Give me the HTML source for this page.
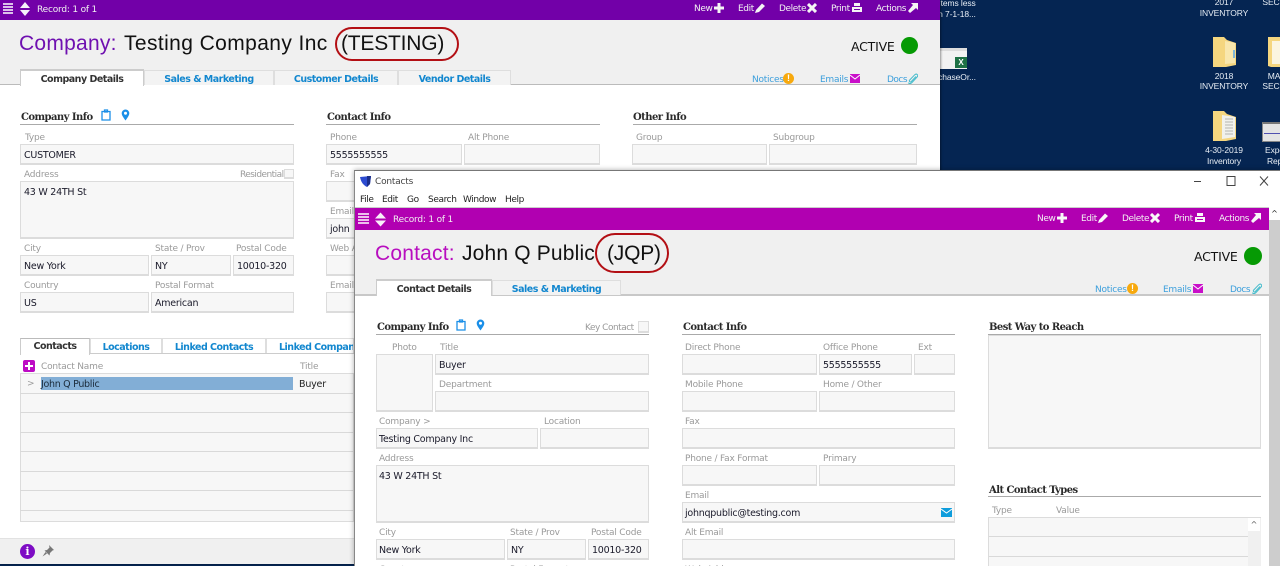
<!DOCTYPE html>
<html><head><meta charset="utf-8"><title>Contacts</title>
<style>
html,body{margin:0;padding:0;width:1280px;height:566px;overflow:hidden;background:#052552}
body{position:relative;font-family:"DejaVu Sans","Liberation Sans",sans-serif;font-size:9.5px;color:#111}
div,span,svg{position:absolute;box-sizing:border-box;white-space:nowrap}
.f{background:#f7f7f7;border:1px solid #dcdcdc;border-bottom-width:2px;padding:0 3px;line-height:22px;font-size:9.5px;color:#1a1a2a;letter-spacing:-.25px}
.l{font-size:9px;color:#9a9a9a;line-height:12px;letter-spacing:-.2px;margin-top:1px}
.h{font-family:"DejaVu Serif","Liberation Serif",serif;font-weight:bold;font-size:10px;color:#2a2a2a;line-height:12px;letter-spacing:-.55px;margin-top:2px}
.r{height:1px;background:#aaa}
.t{font-family:"DejaVu Sans",sans-serif;font-weight:bold;font-size:9.5px;line-height:18px;text-align:center;color:#1287cf;border:1px solid #dedede;border-bottom:0;background:#f3f3f3;letter-spacing:-.5px}
.a{color:#333;background:#fff;border:1px solid #ccc;border-bottom:0;border-top:2px solid #ccc;line-height:16px}
.m{font-size:9px;color:#f2f2f2;line-height:12px;letter-spacing:-.2px;margin-top:1px}
.m2{letter-spacing:-.4px}
.n{font-size:9px;color:#3c9fdc;line-height:12px;letter-spacing:-.25px;margin-top:1px}
.d{font-family:"Liberation Sans",sans-serif;font-size:8.5px;color:#e8eef5;line-height:11px;text-align:center;width:70px;letter-spacing:-.1px;margin-top:1px}
.g{left:20px;width:334px;height:1px;background:#d9d9d9}
.w{font-size:9px;line-height:12px;color:#222;letter-spacing:-.4px}
.tt{font-family:'Liberation Sans',sans-serif;font-size:21px;line-height:26px;color:#111}
</style></head><body>

<!-- desktop -->
<div class="d" style="left:922px;top:-3px">Items less</div>
<div class="d" style="left:922px;top:8px">n 7-1-18...</div>
<div style="left:940px;top:48px;width:27px;height:21px;background:#f2f2f2;border-top:3px solid #ddd"></div>
<div style="left:955px;top:57px;width:12px;height:11px;background:#1e7145;color:#fff;font:bold 8px/11px 'Liberation Sans',sans-serif;text-align:center">X</div>
<div class="d" style="left:922px;top:71px">chaseOr...</div>
<div class="d" style="left:1189px;top:-4px">2017</div>
<div class="d" style="left:1189px;top:7px">INVENTORY</div>
<svg style="left:1212px;top:36px" width="25" height="32" viewBox="0 0 25 32"><path d="M1 1h11l3 3 9 3v22l-10 2-13 0z" fill="#f5d67f"/><path d="M13 5l10 2v20l-10 1z" fill="#f9e7ad"/><path d="M21 14h2v8h-2z" fill="#7fb6d8"/></svg>
<div class="d" style="left:1189px;top:70px">2018</div>
<div class="d" style="left:1189px;top:80px">INVENTORY</div>
<svg style="left:1267px;top:36px" width="13" height="32" viewBox="0 0 13 32"><path d="M1 1h12v30H4l-3-1z" fill="#f5d67f"/><path d="M5 5h8v23H5z" fill="#fbf5e0"/></svg>
<div class="d" style="left:1239px;top:70px">MA</div>
<div class="d" style="left:1239px;top:80px">SECU</div>
<div class="d" style="left:1239px;top:-4px">SECU</div>
<svg style="left:1212px;top:110px" width="25" height="32" viewBox="0 0 25 32"><path d="M1 1h11l3 3 9 3v22l-10 2-13 0z" fill="#f5d67f"/><path d="M10 5l13 2v20l-13 2z" fill="#f1f1ec"/><path d="M13 9h8M13 12h8M13 15h8M13 18h8M13 21h8M13 24h8" stroke="#b5b5b0"/></svg>
<div class="d" style="left:1189px;top:144px">4-30-2019</div>
<div class="d" style="left:1189px;top:155px">Inventory</div>
<div style="left:1262px;top:122px;width:18px;height:20px;background:#e4e4e4;border:1px solid #888;border-right:0;border-top:2px solid #777"></div>
<div style="left:1264px;top:133px;width:16px;height:1px;background:#5050b0"></div>
<div class="d" style="left:1265px;top:144px;text-align:left">Expe</div>
<div class="d" style="left:1267px;top:155px;text-align:left">Rep</div>

<!-- company window -->
<div style="left:0;top:0;width:940px;height:564px;background:#fff;box-shadow:1px 0 2px #0006">
 <div style="left:0;top:0;width:940px;height:20px;background:#7200a8"></div>
 <svg style="left:3px;top:2px" width="28" height="14" viewBox="0 0 28 14"><path d="M0 2h10M0 5h10M0 8h10M0 11h10" stroke="#eadcf2" stroke-width="1.800"/><path d="M17 6l5-6 5 6zM17 8l5 6 5-6z" fill="#f6f0fa"/></svg>
 <div class="m" style="left:37px;top:3px">Record: 1 of 1</div>
 <div class="m m2" style="left:694px;top:2px">New</div>
 <svg style="left:714px;top:3px" width="10" height="10" viewBox="0 0 10 10"><path d="M3.500 0h3v3.500H10v3H6.500V10h-3V6.500H0v-3h3.500z" fill="#f4f4f4"/></svg>
 <div class="m m2" style="top:2px;left:738px">Edit</div>
 <svg style="left:755px;top:3px" width="11" height="10" viewBox="0 0 11 10"><path d="M0 10l1-3 6-6.500 3 2.500-6 6z" fill="#f4f4f4"/></svg>
 <div class="m m2" style="top:2px;left:779px">Delete</div>
 <svg style="left:807px;top:3px" width="10" height="10" viewBox="0 0 10 10"><path d="M1 1l8 8M9 1l-8 8" stroke="#f4f4f4" stroke-width="3"/></svg>
 <div class="m m2" style="left:831px;top:2px">Print</div>
 <svg style="top:3px;left:852px" width="10" height="10" viewBox="0 0 10 10"><path d="M2 0h6v3H2zM0 4h10v5H0z" fill="#f4f4f4"/><path d="M2 6.500h6" stroke="#7200a8"/></svg>
 <div class="m m2" style="left:876px;top:2px">Actions</div>
 <svg style="left:907px;top:3px" width="11" height="10" viewBox="0 0 11 10"><path d="M4 0h7v7l-2-2-6 5-2-2 5-6z" fill="#f4f4f4"/></svg>

 <div style="left:0;top:20px;width:940px;height:65px;background:#f0f0f0;border-bottom:1px solid #bbb"></div>
 <div class="tt" style="left:19px;top:31px;color:#6f10b0;letter-spacing:.25px">Company:</div>
 <div class="tt" style="left:124px;top:31px;letter-spacing:.4px">Testing Company Inc</div>
 <div class="tt" style="left:341px;top:31px;letter-spacing:-.2px">(TESTING)</div>
 <div style="left:335px;top:27px;width:124px;height:34px;border:2px solid #b30f14;border-radius:17px"></div>
 <div style="left:851px;top:39px;font-size:12.5px;line-height:15px;color:#111;letter-spacing:-.2px">ACTIVE</div>
 <div style="left:901px;top:37px;width:17px;height:17px;border-radius:50%;background:#069a04"></div>

 <div class="t a" style="left:20px;top:69px;width:124px;height:17px;line-height:17px">Company Details</div>
 <div class="t" style="left:144px;top:70px;width:130px;height:15px">Sales &amp; Marketing</div>
 <div class="t" style="left:274px;top:70px;width:124px;height:15px">Customer Details</div>
 <div class="t" style="left:398px;top:70px;width:113px;height:15px">Vendor Details</div>

 <div class="n" style="left:752px;top:73px">Notices</div>
 <div style="left:783px;top:73px;width:11px;height:11px;border-radius:50%;background:#f7a90e;color:#fff;font:bold 9px/11px 'Liberation Sans',sans-serif;text-align:center">!</div>
 <div class="n" style="left:820px;top:73px">Emails</div>
 <svg style="left:850px;top:74px" width="10" height="9" viewBox="0 0 10 9"><path d="M0 0h10v9H0z" fill="#c90fc9"/><path d="M0 1l5 4 5-4" stroke="#fff" fill="none"/></svg>
 <div class="n" style="left:887px;top:73px;letter-spacing:-.5px">Docs</div>
 <svg style="left:907px;top:73px" width="11" height="11" viewBox="0 0 11 11"><path d="M9 3.500L4.200 8.600c-1 1-2.600-.4-1.600-1.500L7.800 1.700c1.800-1.700 3.900.6 2.300 2.300L5 9.500c-1 1-2.500 1.500-3.800.3" fill="none" stroke="#45bccc" stroke-width="1"/></svg>

 <div class="h" style="left:21px;top:110px">Company Info</div>
 <svg style="left:101px;top:109px" width="10" height="12" viewBox="0 0 10 12"><path d="M1 2.500h8V11H1zM3.500 1h3v2h-3z" fill="none" stroke="#1b8fe8" stroke-width="1.300"/></svg>
 <svg style="left:121px;top:109px" width="9" height="12" viewBox="0 0 9 12"><path d="M4.500 11.500C2 8 .7 6.200.7 4.300a3.800 3.800 0 0 1 7.600 0c0 1.900-1.300 3.700-3.800 7.200z" fill="#1b8fe8"/><circle cx="4.500" cy="4.200" r="1.500" fill="#fff"/></svg>
 <div class="r" style="left:20px;top:124px;width:274px"></div>
 <div class="l" style="left:25px;top:131px">Type</div>
 <div class="f" style="left:20px;top:144px;width:274px;height:21px">CUSTOMER</div>
 <div class="l" style="left:240px;top:168px;letter-spacing:-.55px">Residential</div>
 <div class="l" style="left:24px;top:168px">Address</div>
 <div class="f" style="left:284px;top:169px;width:10px;height:10px"></div>
 <div class="f" style="left:20px;top:181px;width:274px;height:58px">43 W 24TH St</div>
 <div class="l" style="left:24px;top:242px">City</div>
 <div class="l" style="left:155px;top:242px">State / Prov</div>
 <div class="l" style="left:236px;top:242px">Postal Code</div>
 <div class="f" style="left:20px;top:255px;width:129px;height:21px">New York</div>
 <div class="f" style="left:151px;top:255px;width:80px;height:21px">NY</div>
 <div class="f" style="left:233px;top:255px;width:61px;height:21px">10010-320</div>
 <div class="l" style="left:24px;top:279px">Country</div>
 <div class="l" style="left:155px;top:279px">Postal Format</div>
 <div class="f" style="left:20px;top:292px;width:129px;height:21px">US</div>
 <div class="f" style="left:151px;top:292px;width:143px;height:21px">American</div>

 <div class="h" style="left:327px;top:110px">Contact Info</div>
 <div class="r" style="left:326px;top:124px;width:274px"></div>
 <div class="l" style="left:330px;top:131px">Phone</div>
 <div class="l" style="left:468px;top:131px">Alt Phone</div>
 <div class="f" style="left:326px;top:144px;width:136px;height:21px">5555555555</div>
 <div class="f" style="left:464px;top:144px;width:136px;height:21px"></div>
 <div class="l" style="left:330px;top:168px">Fax</div>
 <div class="f" style="left:326px;top:181px;width:40px;height:21px"></div>
 <div class="l" style="left:330px;top:205px">Email</div>
 <div class="f" style="left:326px;top:218px;width:40px;height:21px">john</div>
 <div class="l" style="left:330px;top:242px">Web A</div>
 <div class="f" style="left:326px;top:255px;width:40px;height:21px"></div>
 <div class="l" style="left:330px;top:279px">Email</div>
 <div class="f" style="left:326px;top:292px;width:40px;height:21px"></div>

 <div class="h" style="left:633px;top:110px">Other Info</div>
 <div class="r" style="left:633px;top:124px;width:284px"></div>
 <div class="l" style="left:636px;top:131px">Group</div>
 <div class="l" style="left:773px;top:131px">Subgroup</div>
 <div class="f" style="left:632px;top:144px;width:135px;height:21px"></div>
 <div class="f" style="left:769px;top:144px;width:148px;height:21px"></div>

 <div style="left:20px;top:353px;width:334px;height:1px;background:#ccc"></div>
 <div class="t a" style="left:20px;top:338px;width:70px;height:17px;border-top:1px solid #bbb">Contacts</div>
 <div class="t" style="left:90px;top:338px;width:72px;height:15px;background:#fff">Locations</div>
 <div class="t" style="left:162px;top:338px;width:104px;height:15px;background:#fff">Linked Contacts</div>
 <div class="t" style="left:266px;top:338px;width:88px;height:15px;background:#fff;text-align:left;padding-left:12px;overflow:hidden">Linked Companies</div>
 <div style="left:23px;top:360px;width:12px;height:12px;background:#bd0bc4;border-radius:2px"></div>
 <svg style="left:25px;top:362px" width="8" height="8" viewBox="0 0 8 8"><path d="M3 0h2v3h3v2H5v3H3V5H0V3h3z" fill="#fff"/></svg>
 <div class="l" style="left:41px;top:360px">Contact Name</div>
 <div class="l" style="left:300px;top:360px">Title</div>
 <div style="left:20px;top:373px;width:334px;height:149px;background:#f7f7f7;border:1px solid #dcdcdc"></div>
 <div class="g" style="top:393px"></div><div class="g" style="top:412px"></div><div class="g" style="top:432px"></div><div class="g" style="top:451px"></div><div class="g" style="top:471px"></div><div class="g" style="top:490px"></div><div class="g" style="top:510px"></div>
 <div class="l" style="left:27px;top:377px">&gt;</div>
 <div style="left:41px;top:377px;width:252px;height:13px;background:#82aed6;font-size:9.5px;line-height:15px;color:#1a2a3a;letter-spacing:-.3px">John Q Public</div>
 <div style="left:299px;top:377px;font-size:9.5px;line-height:15px;color:#222;letter-spacing:-.2px">Buyer</div>

 <div style="left:0;top:538px;width:940px;height:26px;background:#f0f0f0;border-top:1px solid #e2e2e2"></div>
 <div style="left:20px;top:544px;width:15px;height:15px;border-radius:50%;background:#7d0cc4;color:#fff;font:bold 11px/15px 'DejaVu Serif',serif;text-align:center">i</div>
 <svg style="left:42px;top:545px" width="12" height="12" viewBox="0 0 12 12"><path d="M7 0l5 5-1.500.5-2.500 2.500-.5 2.500-5-5 2.500-.5L7.500 2.500zM3.500 7L.5 11.500 5 8.500z" fill="#777"/></svg>
</div>

<!-- contact window -->
<div style="left:354px;top:170px;width:926px;height:396px;background:#fff;border-top:1px solid #777;border-left:1px solid #888;box-shadow:0 0 5px #0005"></div>
<svg style="left:360px;top:176px" width="12" height="11" viewBox="0 0 12 11"><path d="M0 1l11-1-1 8-3 3C3 9 1 6 0 1z" fill="#2c4bd0"/><path d="M7 0h4L10 8 7 11z" fill="#1a2d8a"/></svg>
<div class="w" style="left:375px;top:176px;color:#444;letter-spacing:-.2px">Contacts</div>
<svg style="left:1190px;top:175px" width="80" height="12" viewBox="0 0 80 12"><path d="M4 6.500h7" stroke="#444"/><path d="M37 1.500h8v9h-8z" fill="none" stroke="#444"/><path d="M70 1.500l8 9M78 1.500l-8 9" stroke="#444"/></svg>
<div class="w" style="left:360px;top:194px">File</div>
<div class="w" style="left:382px;top:194px">Edit</div>
<div class="w" style="left:407px;top:194px">Go</div>
<div class="w" style="left:428px;top:194px">Search</div>
<div class="w" style="left:463px;top:194px">Window</div>
<div class="w" style="left:505px;top:194px">Help</div>

<div style="left:355px;top:207px;width:914px;height:23px;background:#b100b1;border-top:1px solid #ccc"></div>
<svg style="left:358px;top:212px" width="29" height="15" viewBox="0 0 29 15"><path d="M0 2h11M0 5h11M0 8h11M0 11h11" stroke="#f3dcf3" stroke-width="1.800"/><path d="M17 6.500l5.500-6 5.500 6zM17 8.500l5.500 6 5.500-6z" fill="#f8eef8"/></svg>
<div class="m" style="left:393px;top:213px">Record: 1 of 1</div>
<div class="m m2" style="left:1037px;top:212px">New</div>
<svg style="left:1057px;top:213px" width="10" height="10" viewBox="0 0 10 10"><path d="M3.500 0h3v3.500H10v3H6.500V10h-3V6.500H0v-3h3.500z" fill="#f8f8f8"/></svg>
<div class="m m2" style="left:1081px;top:212px">Edit</div>
<svg style="left:1098px;top:213px" width="11" height="10" viewBox="0 0 11 10"><path d="M0 10l1-3 6-6.500 3 2.500-6 6z" fill="#f8f8f8"/></svg>
<div class="m m2" style="left:1122px;top:212px">Delete</div>
<svg style="left:1150px;top:213px" width="10" height="10" viewBox="0 0 10 10"><path d="M1 1l8 8M9 1l-8 8" stroke="#f8f8f8" stroke-width="3"/></svg>
<div class="m m2" style="left:1174px;top:212px">Print</div>
<svg style="left:1195px;top:213px" width="10" height="10" viewBox="0 0 10 10"><path d="M2 0h6v3H2zM0 4h10v5H0z" fill="#f8f8f8"/><path d="M2 6.500h6" stroke="#b100b1"/></svg>
<div class="m m2" style="left:1219px;top:212px">Actions</div>
<svg style="left:1250px;top:213px" width="11" height="10" viewBox="0 0 11 10"><path d="M4 0h7v7l-2-2-6 5-2-2 5-6z" fill="#f8f8f8"/></svg>

<div style="left:355px;top:230px;width:914px;height:66px;background:#f0f0f0;border-bottom:2px solid #c8c8c8"></div>
<div class="tt" style="left:375px;top:241px;color:#b80ebf;letter-spacing:.2px">Contact:</div>
<div class="tt" style="left:462px;top:241px;letter-spacing:.17px">John Q Public</div>
<div class="tt" style="left:607px;top:241px;letter-spacing:-.2px">(JQP)</div>
<div style="left:595px;top:233px;width:74px;height:40px;border:2px solid #b30f14;border-radius:20px"></div>
<div style="left:1194px;top:249px;font-size:12.5px;line-height:15px;color:#111;letter-spacing:-.2px">ACTIVE</div>
<div style="left:1244px;top:247px;width:18px;height:18px;border-radius:50%;background:#069a04"></div>

<div class="t a" style="left:376px;top:279px;width:116px;height:17px;line-height:17px">Contact Details</div>
<div class="t" style="left:492px;top:280px;width:129px;height:15px">Sales &amp; Marketing</div>
<div class="n" style="left:1095px;top:283px">Notices</div>
<div style="left:1127px;top:283px;width:11px;height:11px;border-radius:50%;background:#f7a90e;color:#fff;font:bold 9px/11px 'Liberation Sans',sans-serif;text-align:center">!</div>
<div class="n" style="left:1163px;top:283px">Emails</div>
<svg style="left:1193px;top:284px" width="10" height="9" viewBox="0 0 10 9"><path d="M0 0h10v9H0z" fill="#c90fc9"/><path d="M0 1l5 4 5-4" stroke="#fff" fill="none"/></svg>
<div class="n" style="left:1230px;top:283px;letter-spacing:-.5px">Docs</div>
<svg style="left:1251px;top:283px" width="11" height="11" viewBox="0 0 11 11"><path d="M9 3.500L4.200 8.600c-1 1-2.600-.4-1.600-1.500L7.800 1.700c1.800-1.700 3.900.6 2.300 2.300L5 9.500c-1 1-2.500 1.500-3.800.3" fill="none" stroke="#45bccc" stroke-width="1"/></svg>

<div style="left:1269px;top:207px;width:11px;height:359px;background:#cdcdcd"></div>
<div style="left:1269px;top:207px;width:11px;height:13px;background:#fff;color:#222;font:8px/13px 'DejaVu Sans',sans-serif;text-align:center">^</div>

<div class="h" style="left:377px;top:320px">Company Info</div>
<svg style="left:456px;top:319px" width="10" height="12" viewBox="0 0 10 12"><path d="M1 2.500h8V11H1zM3.500 1h3v2h-3z" fill="none" stroke="#1b8fe8" stroke-width="1.300"/></svg>
<svg style="left:476px;top:319px" width="9" height="12" viewBox="0 0 9 12"><path d="M4.500 11.500C2 8 .7 6.200.7 4.300a3.800 3.800 0 0 1 7.600 0c0 1.900-1.300 3.700-3.800 7.200z" fill="#1b8fe8"/><circle cx="4.500" cy="4.200" r="1.500" fill="#fff"/></svg>
<div class="l" style="left:585px;top:321px;letter-spacing:-.5px">Key Contact</div>
<div class="f" style="left:638px;top:321px;width:11px;height:12px"></div>
<div class="r" style="left:376px;top:334px;width:273px"></div>
<div class="l" style="left:392px;top:341px">Photo</div>
<div class="l" style="left:440px;top:341px">Title</div>
<div class="f" style="left:376px;top:354px;width:57px;height:58px"></div>
<div class="f" style="left:435px;top:354px;width:214px;height:21px">Buyer</div>
<div class="l" style="left:439px;top:378px">Department</div>
<div class="f" style="left:435px;top:391px;width:214px;height:21px"></div>
<div class="l" style="left:379px;top:415px">Company &gt;</div>
<div class="l" style="left:544px;top:415px">Location</div>
<div class="f" style="left:376px;top:428px;width:162px;height:21px;padding-left:2px">Testing Company Inc</div>
<div class="f" style="left:540px;top:428px;width:109px;height:21px"></div>
<div class="l" style="left:379px;top:452px">Address</div>
<div class="f" style="left:376px;top:465px;width:273px;height:58px;padding-left:2px">43 W 24TH St</div>
<div class="l" style="left:379px;top:526px">City</div>
<div class="l" style="left:510px;top:526px">State / Prov</div>
<div class="l" style="left:591px;top:526px">Postal Code</div>
<div class="f" style="left:376px;top:539px;width:129px;height:21px;padding-left:2px">New York</div>
<div class="f" style="left:507px;top:539px;width:79px;height:21px">NY</div>
<div class="f" style="left:588px;top:539px;width:61px;height:21px">10010-320</div>
<div class="l" style="left:379px;top:563px">Country</div>
<div class="l" style="left:510px;top:563px">Postal Format</div>

<div class="h" style="left:683px;top:320px">Contact Info</div>
<div class="r" style="left:682px;top:334px;width:273px"></div>
<div class="l" style="left:685px;top:341px">Direct Phone</div>
<div class="l" style="left:823px;top:341px">Office Phone</div>
<div class="l" style="left:918px;top:341px">Ext</div>
<div class="f" style="left:682px;top:354px;width:135px;height:21px"></div>
<div class="f" style="left:819px;top:354px;width:93px;height:21px">5555555555</div>
<div class="f" style="left:914px;top:354px;width:41px;height:21px"></div>
<div class="l" style="left:685px;top:378px">Mobile Phone</div>
<div class="l" style="left:823px;top:378px">Home / Other</div>
<div class="f" style="left:682px;top:391px;width:135px;height:21px"></div>
<div class="f" style="left:819px;top:391px;width:136px;height:21px"></div>
<div class="l" style="left:685px;top:415px">Fax</div>
<div class="f" style="left:682px;top:428px;width:273px;height:21px"></div>
<div class="l" style="left:685px;top:452px">Phone / Fax Format</div>
<div class="l" style="left:823px;top:452px">Primary</div>
<div class="f" style="left:682px;top:465px;width:135px;height:21px"></div>
<div class="f" style="left:819px;top:465px;width:136px;height:21px"></div>
<div class="l" style="left:685px;top:489px">Email</div>
<div class="f" style="left:682px;top:502px;width:273px;height:21px;padding-left:2px">johnqpublic@testing.com</div>
<svg style="left:941px;top:508px" width="11" height="9" viewBox="0 0 11 9"><path d="M0 0h11v9H0z" fill="#0f9ddc"/><path d="M0 1l5.500 4L11 1" stroke="#fff" fill="none"/></svg>
<div class="l" style="left:685px;top:526px">Alt Email</div>
<div class="f" style="left:682px;top:539px;width:273px;height:21px"></div>
<div class="l" style="left:685px;top:563px">Web Address</div>

<div class="h" style="left:989px;top:320px">Best Way to Reach</div>
<div class="r" style="left:988px;top:334px;width:273px"></div>
<div class="f" style="left:988px;top:335px;width:273px;height:114px"></div>
<div class="h" style="left:989px;top:483px">Alt Contact Types</div>
<div class="r" style="left:988px;top:496px;width:273px"></div>
<div class="l" style="left:992px;top:504px">Type</div>
<div class="l" style="left:1056px;top:504px">Value</div>
<div style="left:988px;top:517px;width:273px;height:49px;background:#f7f7f7;border:1px solid #dcdcdc;border-bottom:0"></div>
<div style="left:989px;top:536px;width:259px;height:1px;background:#d9d9d9"></div>
<div style="left:989px;top:556px;width:259px;height:1px;background:#d9d9d9"></div>
<div style="left:1248px;top:518px;width:13px;height:48px;background:#f0f0f0"></div>
<div style="left:1248px;top:518px;width:12px;height:13px;background:#fff;color:#555;font:8px/13px 'DejaVu Sans',sans-serif;text-align:center">^</div>
</body></html>
